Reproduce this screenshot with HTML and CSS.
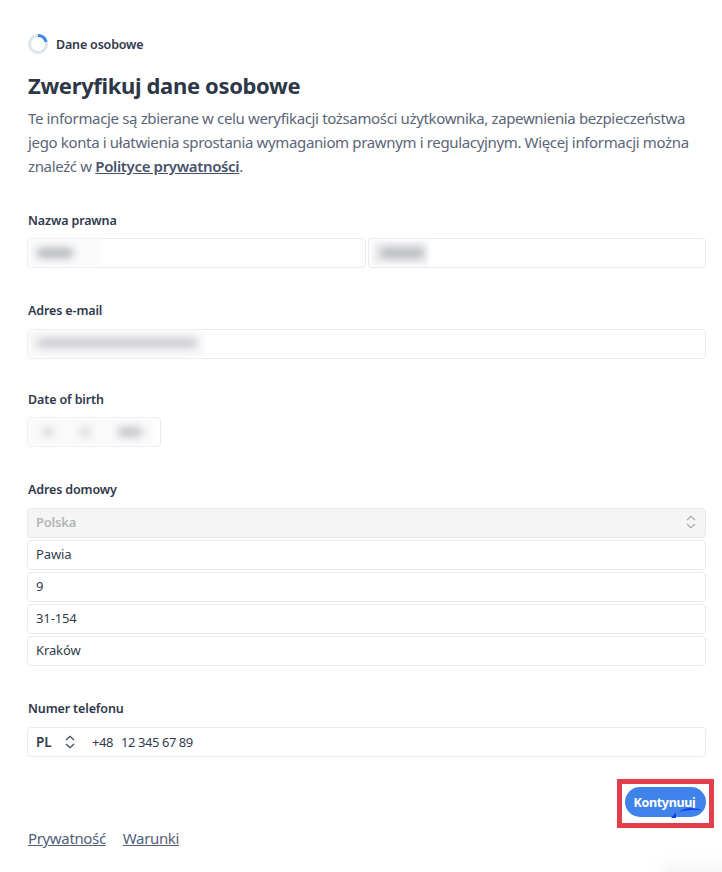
FILE: index.html
```html
<!DOCTYPE html>
<html lang="pl">
<head>
<meta charset="utf-8">
<title>Dane osobowe</title>
<link rel="stylesheet" href="styles.css">
</head>
<body>
<main class="page">
  <div class="step">
    <svg class="spinner" width="20" height="20" viewBox="0 0 20 20" fill="none">
      <circle cx="10" cy="10" r="8.5" stroke="#dfe3ea" stroke-width="3"/>
      <path d="M10 1.5A8.5 8.5 0 0 1 18.2 7.8" stroke="#3b82ec" stroke-width="3"/>
    </svg>
    <span class="step-name">Dane osobowe</span>
  </div>
  <h1 class="title">Zweryfikuj dane osobowe</h1>
  <p class="intro">Te informacje są zbierane w celu weryfikacji tożsamości użytkownika, zapewnienia bezpieczeństwa jego konta i ułatwienia sprostania wymaganiom prawnym i regulacyjnym. Więcej informacji można znaleźć w <a class="policy" href="#">Polityce prywatności</a>.</p>

  <section class="group group-name">
    <div class="label">Nazwa prawna</div>
    <div class="row">
      <div class="field grow"><span class="patch patch-first"><span class="smudge s-first"></span></span></div>
      <div class="field grow"><span class="patch patch-last"><span class="smudge s-last"></span></span></div>
    </div>
  </section>

  <section class="group group-email">
    <div class="label">Adres e-mail</div>
    <div class="field"><span class="patch patch-email"><span class="smudge s-email"></span></span></div>
  </section>

  <section class="group group-dob">
    <div class="label">Date of birth</div>
    <div class="field dob">
      <span class="patch patch-dob"><span class="smudge s-dd"></span><span class="smudge s-mm"></span><span class="smudge s-yy"></span></span>
    </div>
  </section>

  <section class="group group-address">
    <div class="label">Adres domowy</div>
    <div class="stack">
      <div class="field disabled">
        <span class="country">Polska</span>
        <svg class="updown" width="10" height="14" viewBox="0 0 10 14" fill="none"><path d="M1 5 5 1.300 9 5M1 9l4 3.700L9 9" stroke="#a9acb1" stroke-width="1.200"/></svg>
      </div>
      <div class="field">Pawia</div>
      <div class="field">9</div>
      <div class="field">31-154</div>
      <div class="field">Kraków</div>
    </div>
  </section>

  <section class="group group-phone">
    <div class="label">Numer telefonu</div>
    <div class="field phone">
      <span class="cc">PL</span>
      <svg class="updown-dark" width="10" height="14" viewBox="0 0 10 14" fill="none"><path d="M1 5 5 1.300 9 5M1 9l4 3.700L9 9" stroke="#3a4455" stroke-width="1.200"/></svg>
      <span class="prefix">+48</span>
      <span class="number">12 345 67 89</span>
    </div>
  </section>

  <div class="actions">
    <div class="highlight">
      <button class="continue" type="button">Kontynuuj</button>
      <svg class="artifact" width="33" height="12" viewBox="0 0 33 12"><path d="M0 12 5 6.500V12ZM8 6C14 1 24 1 32 4.500 24 3.500 16 4 8 6Z" fill="#0a3ff0"/></svg>
    </div>
  </div>

  <footer class="links">
    <a href="#">Prywatność</a>
    <a href="#">Warunki</a>
  </footer>
</main>
<div class="corner-shadow"></div>
</body>
</html>
```
FILE: styles.css
```css
* { box-sizing: border-box; }
html, body { margin: 0; padding: 0; background: #fff; }
body {
  width: 722px;
  height: 872px;
  overflow: hidden;
  position: relative;
  font-family: "Noto Sans", "Open Sans", sans-serif;
  color: #2f3a4c;
}
.page { padding: 33px 16px 0 27px; }
.step { display: flex; align-items: center; gap: 8px; height: 22px; padding-left: 1px; }
.step-name { font-size: 12.500px; font-weight: 600; letter-spacing: -0.180px; color: #30394b; }
.title { margin: 14px 0 0 1px; font-size: 22px; line-height: 32px; font-weight: 700; letter-spacing: -0.350px; color: #2d3748; }
.intro { margin: 5px 0 0 1px; font-size: 15px; line-height: 24px; letter-spacing: -0.350px; color: #5a6577; width: 672px; }
.policy { color: #47526a; font-weight: 600; }
.group { display: block; }
.label { font-size: 12.500px; line-height: 18px; font-weight: 600; letter-spacing: -0.130px; color: #30394b; padding-left: 1px; margin-bottom: 9px; }
.group-name { margin-top: 34px; }
.group-name .label { margin-bottom: 8px; }
.group-email { margin-top: 34px; }
.group-dob { margin-top: 32px; }
.group-dob .label { margin-bottom: 8px; }
.group-address { margin-top: 34px; }
.group-phone { margin-top: 34px; }
.row { display: flex; gap: 2px; }
.grow { flex: 1; }
.field {
  position: relative;
  height: 30px;
  border: 1px solid #e9eaec;
  border-radius: 4px;
  background: #fff;
  display: flex;
  align-items: center;
  padding: 0 8px;
  font-size: 13px;
  letter-spacing: -0.120px;
  color: #323c4e;
}
.dob { width: 134px; }
.stack { display: flex; flex-direction: column; gap: 2px; }
.stack .field { padding-bottom: 2px; }
.stack .disabled { background: #f5f5f5; justify-content: space-between; padding-right: 9px; }
.country { font-weight: 600; color: #b3b5b8; letter-spacing: -0.200px; }
.phone { gap: 0; }
.cc { font-weight: 600; width: 29px; font-size: 13.500px; }
.updown-dark { margin-right: 17px; }
.prefix { margin-right: 8px; letter-spacing: -0.400px; }
.number { letter-spacing: -0.450px; }

.patch { position: absolute; left: 0; top: 0; bottom: 0; background: #f6f6f7; filter: blur(2px); overflow: hidden; }
.smudge { position: absolute; top: 9px; height: 10px; background: #b3b6bc; filter: blur(3.500px); border-radius: 4px; display: block; }
.patch-first { width: 74px; background: #fafafa; }
.s-first { left: 9px; width: 36px; }
.patch-last { left: 3px; top: 2px; bottom: 2px; width: 56px; background: #f2f2f3; }
.s-last { left: 8px; top: 7px; width: 44px; }
.patch-email { width: 176px; background: #f8f8f9; }
.s-email { left: 9px; width: 160px; height: 8px; background: #c2c4c9; }
.patch-dob { width: 125px; background: #fafafa; }
.s-dd { left: 15px; width: 10px; background: #d6d7da; }
.s-mm { left: 52px; width: 10px; background: #d6d7da; }
.s-yy { left: 90px; width: 24px; background: #c1c3c7; }

.actions { display: flex; justify-content: flex-end; margin: 22px -8px 0 0; }
.highlight { position: relative; border: 5px solid #e13f4a; width: 97px; height: 49px; padding: 3px 0 0 3px; }
.continue {
  display: block;
  width: 81px;
  height: 30px;
  border: 0;
  border-radius: 15px;
  padding: 0 2px 0 0;
  background: #3f83ea;
  color: #fff;
  font-family: inherit;
  font-size: 12.500px;
  font-weight: 700;
  letter-spacing: -0.350px;
}
.artifact { position: absolute; left: 49px; top: 22px; }
.links { display: flex; gap: 17px; margin: 0 0 0 1px; font-size: 15px; line-height: 20px; letter-spacing: -0.350px; }
.links a { color: #535e78; }
.corner-shadow {
  position: absolute;
  right: -30px;
  top: 862px;
  width: 90px;
  height: 30px;
  background: #f6f6f6;
  filter: blur(7px);
}
```
